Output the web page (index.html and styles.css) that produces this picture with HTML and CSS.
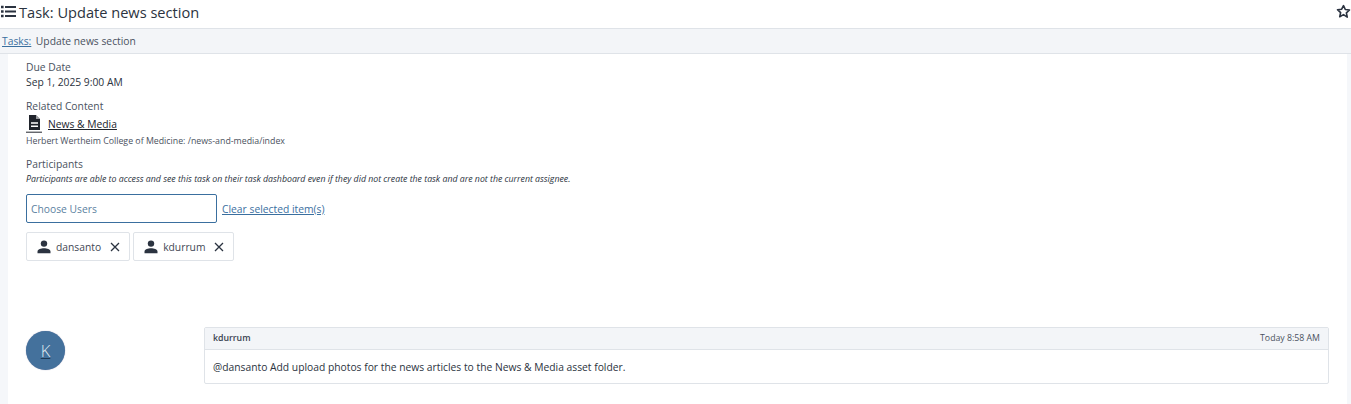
FILE: index.html
```html
<!DOCTYPE html>
<html lang="en">
<head>
<meta charset="utf-8">
<title>Task: Update news section</title>
<link rel="stylesheet" href="styles.css">
</head>
<body>
<header class="title-bar">
  <svg class="list-icon" width="15" height="13" viewBox="0 0 15 13" aria-hidden="true"><path d="M0 .8h2.600v2.400H0zM0 5.300h2.600v2.400H0zM0 9.800h2.600v2.400H0z" fill="#2b3340"/><path d="M4 1.100h11v1.800H4zM4 5.600h11v1.800H4zM4 10.100h11v1.800H4z" fill="#2b3340"/></svg>
  <h1 class="title">Task: Update news section</h1>
  <svg class="star-icon" width="15" height="15" viewBox="0 0 24 24" aria-hidden="true"><path d="M12 2.600l2.900 6.200 6.700.8-5 4.600 1.400 6.700L12 17l-6 3.400 1.400-6.700-5-4.600 6.700-.8z" fill="none" stroke="#2b3340" stroke-width="2.600" stroke-linejoin="round"/></svg>
</header>
<nav class="crumbs"><a class="link" href="#">Tasks:</a><span class="crumb-current">Update news section</span></nav>
<main class="page">
  <section class="sheet">
    <div class="field due">
      <div class="label">Due Date</div>
      <div class="value">Sep 1, 2025 9:00 AM</div>
    </div>
    <div class="field related">
      <div class="label">Related Content</div>
      <div class="asset">
        <svg class="doc-icon" width="16" height="19" viewBox="0 0 16 19" aria-hidden="true"><path d="M3 1h7l4 4v11H3z" fill="#20242c"/><path d="M5 8.200h7v1.500H5zM5 11.400h7v1.500H5z" fill="#fff"/><path d="M10 1v4h4" fill="#fff" opacity=".55"/><path d="M0 18.200h16" stroke="#20242c" stroke-width="1"/></svg>
        <a class="asset-link" href="#">News &amp; Media</a>
      </div>
      <div class="path">Herbert Wertheim College of Medicine: /news-and-media/index</div>
    </div>
    <div class="field participants">
      <div class="label">Participants</div>
      <div class="note">Participants are able to access and see this task on their task dashboard even if they did not create the task and are not the current assignee.</div>
      <div class="chooser">
        <div class="input">Choose Users</div>
        <a class="link clear" href="#">Clear selected item(s)</a>
      </div>
      <div class="chips">
        <div class="chip">
          <svg class="person" width="14" height="14" viewBox="0 0 14 14" aria-hidden="true"><circle cx="7" cy="3.600" r="3.200" fill="#2b3340"/><path d="M0.500 13.200v-1.500c0-2.400 3.600-3.400 6.500-3.400s6.500 1 6.500 3.400v1.500z" fill="#2b3340"/></svg>
          <span>dansanto</span>
          <svg class="close" width="10" height="10" viewBox="0 0 10 10" aria-hidden="true"><path d="M1 1l8 8M9 1l-8 8" stroke="#2b3340" stroke-width="1.300"/></svg>
        </div>
        <div class="chip">
          <svg class="person" width="14" height="14" viewBox="0 0 14 14" aria-hidden="true"><circle cx="7" cy="3.600" r="3.200" fill="#2b3340"/><path d="M0.500 13.200v-1.500c0-2.400 3.600-3.400 6.500-3.400s6.500 1 6.500 3.400v1.500z" fill="#2b3340"/></svg>
          <span>kdurrum</span>
          <svg class="close" width="10" height="10" viewBox="0 0 10 10" aria-hidden="true"><path d="M1 1l8 8M9 1l-8 8" stroke="#2b3340" stroke-width="1.300"/></svg>
        </div>
      </div>
    </div>
    <div class="comment">
      <div class="avatar"><a class="avatar-letter" href="#">K</a></div>
      <article class="card">
        <div class="card-head"><strong class="author">kdurrum</strong><span class="time">Today 8:58 AM</span></div>
        <div class="card-body">@dansanto Add upload photos for the news articles to the News &amp; Media asset folder.</div>
      </article>
    </div>
  </section>
</main>
</body>
</html>
```

FILE: styles.css
```css
* { box-sizing: border-box; }
html, body { margin: 0; height: 100%; overflow: hidden; }
body {
  background: #f5f7fa;
  color: #2b3340;
  font-family: "Open Sans", "Liberation Sans", sans-serif;
  font-size: 10.3px;
}
.title-bar {
  display: flex;
  align-items: center;
  height: 29px;
  padding: 0 0 5px 1px;
  background: #fff;
  border-bottom: 1px solid #dfe3e8;
}
.list-icon { flex: none; }
.title {
  margin: 0 0 0 3px;
  flex: 1;
  font-size: 14.6px;
  font-weight: 400;
  line-height: 24px;
  color: #2b3340;
}
.star-icon { flex: none; }
.crumbs {
  display: flex;
  align-items: center;
  gap: 4.5px;
  height: 25px;
  padding: 0 0 0 2px;
  background: #f3f5f8;
  border-bottom: 1px solid #dfe3e8;
  font-size: 10.3px;
  color: #4a5260;
}
.link { color: #3a6f9f; text-decoration: underline; }
.page { padding: 0 4px 0 8px; height: 350px; }
.sheet { background: #fff; height: 100%; padding: 6px 18px 0; }
.label { font-size: 10.3px; line-height: 15px; color: #4a5260; }
.value { font-size: 10.3px; line-height: 15px; color: #2b3340; }
.related { margin-top: 9px; }
.asset { display: flex; align-items: center; gap: 6px; height: 19px; }
.doc-icon { flex: none; }
.asset-link { color: #20242c; text-decoration: underline; font-size: 10.3px; }
.path { font-size: 8.8px; line-height: 12px; margin-top: 2px; color: #4a5260; }
.participants { margin-top: 10px; }
.note { font-size: 8.77px; font-style: italic; line-height: 12px; margin-top: 1px; color: #2b3340; }
.chooser { display: flex; align-items: center; gap: 5px; margin-top: 9px; }
.input {
  width: 191px;
  height: 29px;
  padding: 0 4px;
  display: flex;
  align-items: center;
  border: 1px solid #3a6f9f;
  border-radius: 2px;
  font-size: 10.3px;
  color: #5b7f9f;
}
.clear { font-size: 10.3px; }
.chips { display: flex; gap: 3px; margin-top: 9px; }
.chip {
  display: flex;
  align-items: center;
  height: 29px;
  padding: 0 9px 0 10px;
  border: 1px solid #dfe3e8;
  border-radius: 2px;
  font-size: 10.3px;
  color: #3f4754;
}
.person { margin-right: 5px; }
.close { margin-left: 9px; }
.comment { display: flex; margin-top: 66px; }
.avatar {
  flex: none;
  width: 39px;
  height: 39px;
  margin-top: 4px;
  border-radius: 50%;
  background: #44719c;
  display: flex;
  align-items: center;
  justify-content: center;
  box-shadow: 0 0 1px #88a;
}
.avatar-letter {
  color: #dfe8f0;
  font-size: 16.5px;
  font-weight: 300;
  text-decoration: underline;
  text-decoration-color: #1e3a55;
}
.card {
  flex: 1;
  margin-left: 139px;
  border: 1px solid #dfe3e8;
  border-radius: 2px;
  background: #fff;
}
.card-head {
  display: flex;
  justify-content: space-between;
  align-items: center;
  height: 22px;
  padding: 0 8px 1px 8px;
  background: #f3f5f8;
  border-bottom: 1px solid #dfe3e8;
  font-size: 8.75px;
}
.author { font-weight: 600; color: #3a4250; }
.time { color: #4a5260; }
.card-body { padding: 0 8px; height: 33px; display: flex; align-items: center; font-size: 10.3px; color: #2b3340; }
```
